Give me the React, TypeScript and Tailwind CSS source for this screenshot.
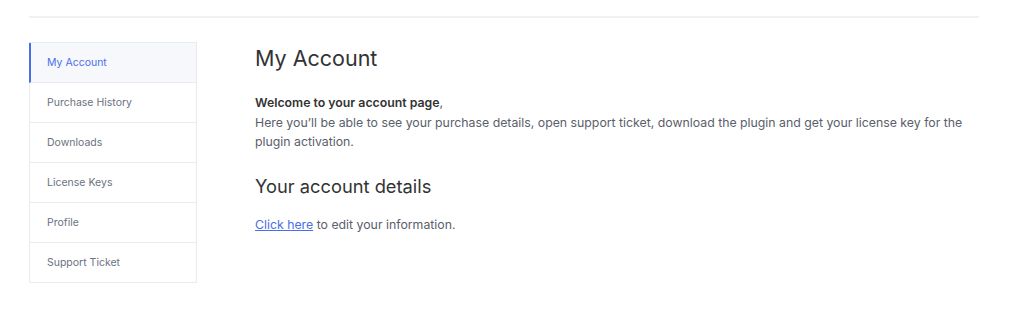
const menu = [
  "My Account",
  "Purchase History",
  "Downloads",
  "License Keys",
  "Profile",
  "Support Ticket",
];

export default function App() {
  return (
    <div
      className="min-h-[322px] w-[1024px] bg-white"
      style={{ fontFamily: "Inter, 'Noto Sans', sans-serif" }}
    >
      <div className="mx-[29px] w-[950px] pt-4">
        {/* top divider */}
        <div className="h-[2px] bg-[#f0f2f6]" />

        <div className="mt-[24px] flex gap-[58px]">
          {/* Sidebar */}
          <nav className="w-[168px] shrink-0 border-y border-r border-[#e8ecf2]">
            {menu.map((item, i) => (
              <a
                key={item}
                href="#"
                className={
                  i === 0
                    ? "flex h-[40px] items-center border-b border-l-2 border-b-[#e8ecf2] border-l-[#4a6ee8] bg-[#f6f8fc] pl-[16px] text-[10.5px] text-[#4a6ee8]"
                    : i === menu.length - 1
                      ? "flex h-[39px] items-center border-l border-[#e8ecf2] pl-[17px] text-[10.5px] text-[#6b7280]"
                      : "flex h-[40px] items-center border-b border-l border-[#e8ecf2] pl-[17px] text-[10.5px] text-[#6b7280]"
                }
              >
                {item}
              </a>
            ))}
          </nav>

          {/* Content */}
          <div className="flex-1 pt-[2px]">
            <h1 className="text-[21.5px] leading-[28px] font-normal text-[#333333]">
              My Account
            </h1>
            <p className="mt-[21px] text-[12.3px] leading-[19.5px] text-[#5a606b]">
              <strong className="font-semibold text-[#333333]">
                Welcome to your account page
              </strong>
              ,
              <br />
              Here you’ll be able to see your purchase details, open support
              ticket, download the plugin and get your license key for the
              plugin activation.
            </p>
            <h2 className="mt-[22px] text-[18.3px] leading-[24px] font-normal text-[#333333]">
              Your account details
            </h2>
            <p className="mt-[17px] text-[12.3px] leading-[19.5px] text-[#5a606b]">
              <a href="#" className="text-[#4a6ee8] underline">
                Click here
              </a>{" "}
              to edit your information.
            </p>
          </div>
        </div>
      </div>
    </div>
  );
}
